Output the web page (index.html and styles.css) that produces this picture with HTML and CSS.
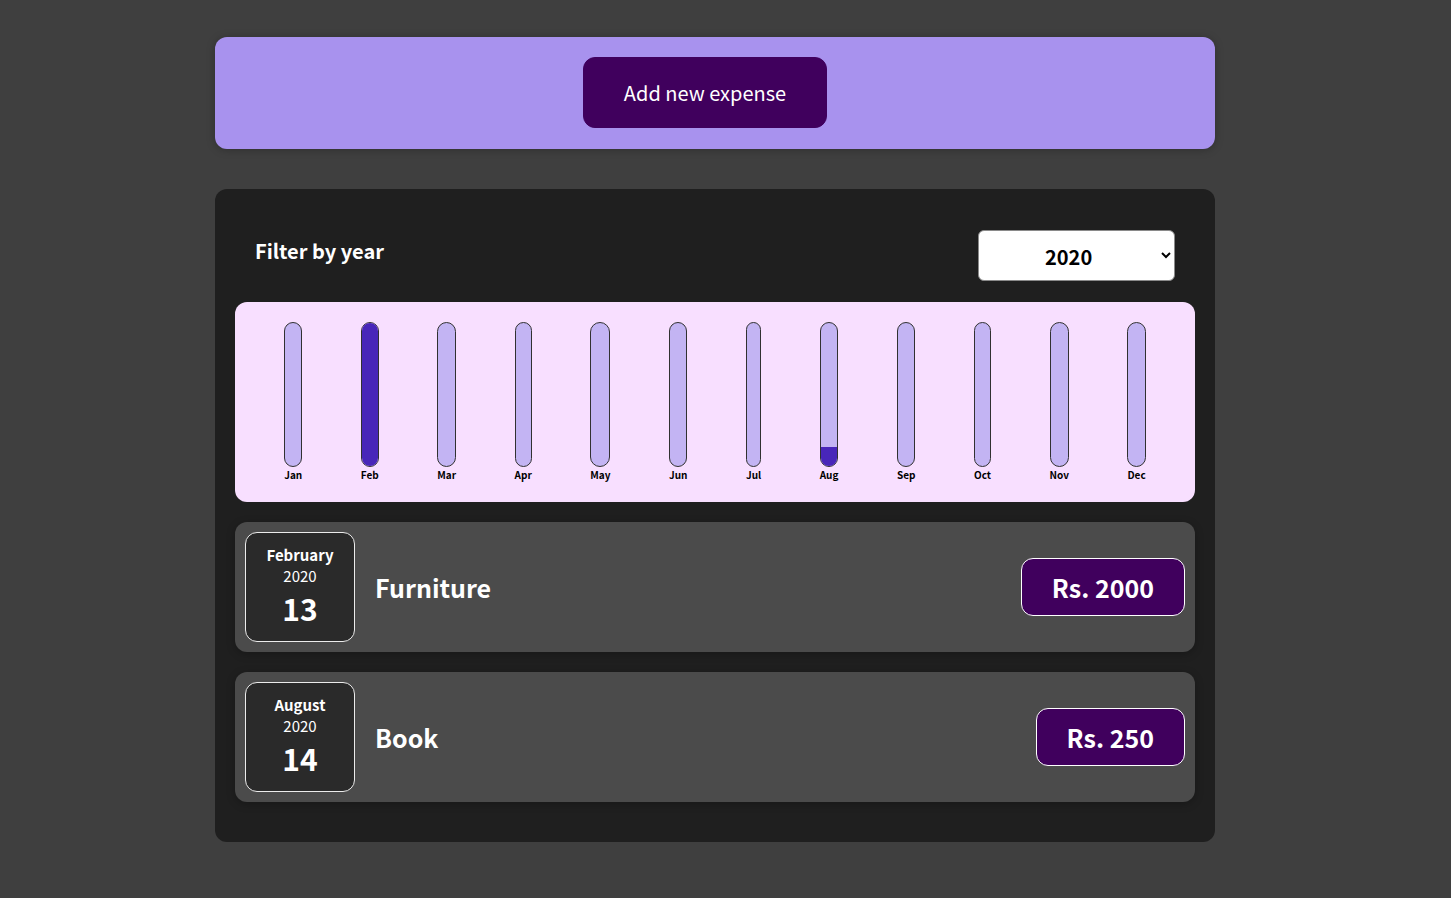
FILE: index.html
```html
<!DOCTYPE html>
<html lang="en">
<head>
<meta charset="utf-8">
<title>Expenses</title>
<link rel="stylesheet" href="styles.css">
</head>
<body>
<div class="app">
  <div class="new-expense">
    <button class="new-expense__button" type="button">Add new expense</button>
  </div>

  <div class="expenses">
    <div class="expenses-filter">
      <div class="expenses-filter__control">
        <label for="year">Filter by year</label>
        <select id="year">
          <option>2022</option>
          <option>2021</option>
          <option selected>2020</option>
          <option>2019</option>
        </select>
      </div>
    </div>

    <div class="chart">
      <div class="chart-bar"><div class="chart-bar__inner"><div class="chart-bar__fill" style="height:0%"></div></div><div class="chart-bar__label">Jan</div></div>
      <div class="chart-bar"><div class="chart-bar__inner"><div class="chart-bar__fill" style="height:100%"></div></div><div class="chart-bar__label">Feb</div></div>
      <div class="chart-bar"><div class="chart-bar__inner"><div class="chart-bar__fill" style="height:0%"></div></div><div class="chart-bar__label">Mar</div></div>
      <div class="chart-bar"><div class="chart-bar__inner"><div class="chart-bar__fill" style="height:0%"></div></div><div class="chart-bar__label">Apr</div></div>
      <div class="chart-bar"><div class="chart-bar__inner"><div class="chart-bar__fill" style="height:0%"></div></div><div class="chart-bar__label">May</div></div>
      <div class="chart-bar"><div class="chart-bar__inner"><div class="chart-bar__fill" style="height:0%"></div></div><div class="chart-bar__label">Jun</div></div>
      <div class="chart-bar"><div class="chart-bar__inner"><div class="chart-bar__fill" style="height:0%"></div></div><div class="chart-bar__label">Jul</div></div>
      <div class="chart-bar"><div class="chart-bar__inner"><div class="chart-bar__fill" style="height:13%"></div></div><div class="chart-bar__label">Aug</div></div>
      <div class="chart-bar"><div class="chart-bar__inner"><div class="chart-bar__fill" style="height:0%"></div></div><div class="chart-bar__label">Sep</div></div>
      <div class="chart-bar"><div class="chart-bar__inner"><div class="chart-bar__fill" style="height:0%"></div></div><div class="chart-bar__label">Oct</div></div>
      <div class="chart-bar"><div class="chart-bar__inner"><div class="chart-bar__fill" style="height:0%"></div></div><div class="chart-bar__label">Nov</div></div>
      <div class="chart-bar"><div class="chart-bar__inner"><div class="chart-bar__fill" style="height:0%"></div></div><div class="chart-bar__label">Dec</div></div>
    </div>

    <ul class="expenses-list">
      <li class="expense-item">
        <div class="expense-date">
          <div class="expense-date__month">February</div>
          <div class="expense-date__year">2020</div>
          <div class="expense-date__day">13</div>
        </div>
        <div class="expense-item__description">
          <h2>Furniture</h2>
          <div class="expense-item__price">Rs. 2000</div>
        </div>
      </li>
      <li class="expense-item">
        <div class="expense-date">
          <div class="expense-date__month">August</div>
          <div class="expense-date__year">2020</div>
          <div class="expense-date__day">14</div>
        </div>
        <div class="expense-item__description">
          <h2>Book</h2>
          <div class="expense-item__price">Rs. 250</div>
        </div>
      </li>
    </ul>
  </div>
</div>
</body>
</html>
```

FILE: styles.css
```css
* {
  box-sizing: border-box;
}

html {
  font-size: 20px;
  font-family: "Noto Sans CJK JP", "Noto Sans", sans-serif;
}

body {
  margin: 0;
  background-color: #3f3f3f;
}

.app {
  width: 1000px;
  margin-left: 215px;
  padding-top: 37px;
}

.new-expense {
  background-color: #a892ee;
  padding: 1rem 1rem 21px;
  margin: 0 0 2rem;
  border-radius: 12px;
  text-align: center;
  box-shadow: 0 1px 8px rgba(0, 0, 0, 0.25);
  line-height: 0;
}

.new-expense__button {
  font: inherit;
  font-size: 1rem;
  line-height: 29px;
  cursor: pointer;
  padding: 1rem 2rem;
  border: 1px solid #40005d;
  background-color: #40005d;
  color: white;
  border-radius: 12px;
  margin-right: 1rem;
}

.expenses {
  padding: 1rem;
  background-color: #1f1f1f;
  border-radius: 12px;
}

.expenses-filter {
  color: white;
  padding: 0 1rem;
}

.expenses-filter__control {
  display: flex;
  width: 100%;
  align-items: center;
  justify-content: space-between;
  margin: 1rem 0;
}

.expenses-filter label {
  font-weight: bold;
  margin-bottom: 0.5rem;
}

.expenses-filter select {
  font: inherit;
  padding: 0.5rem 65px 0.5rem 62px;
  height: 51px;
  margin: 1px 0;
  font-weight: bold;
  border-radius: 6px;
  background-color: #fff;
  color: #000;
  border: 1px solid #8a8a8a;
}

.chart {
  padding: 1rem;
  border-radius: 12px;
  background-color: #f8dfff;
  text-align: center;
  display: flex;
  justify-content: space-around;
  height: 10rem;
}

.chart-bar {
  height: 100%;
  display: flex;
  flex-direction: column;
  align-items: center;
}

.chart-bar__inner {
  height: 100%;
  width: 100%;
  border: 1px solid #313131;
  border-radius: 12px;
  background-color: #c3b4f3;
  overflow: hidden;
  display: flex;
  flex-direction: column;
  justify-content: flex-end;
}

.chart-bar__fill {
  background-color: #4826b9;
  width: 100%;
}

.chart-bar__label {
  font-weight: bold;
  font-size: 0.5rem;
  text-align: center;
  color: #000;
}

.expenses-list {
  list-style: none;
  padding: 0;
  margin: 0;
}

.expense-item {
  display: flex;
  justify-content: space-between;
  align-items: center;
  box-shadow: 0 2px 8px rgba(0, 0, 0, 0.25);
  padding: 0.5rem;
  margin: 1rem 0;
  border-radius: 12px;
  background-color: #4b4b4b;
}

.expense-date {
  display: flex;
  flex-direction: column;
  width: 5.5rem;
  height: 5.5rem;
  border: 1px solid #ececec;
  background-color: #2a2a2a;
  color: white;
  border-radius: 12px;
  align-items: center;
  justify-content: center;
}

.expense-date__month {
  font-size: 0.75rem;
  font-weight: bold;
}

.expense-date__year {
  font-size: 0.75rem;
}

.expense-date__day {
  font-size: 1.5rem;
  font-weight: bold;
}

.expense-item__description {
  display: flex;
  flex-direction: row;
  align-items: center;
  justify-content: flex-start;
  gap: 1rem;
  flex: 1;
}

.expense-item h2 {
  font-size: 1.25rem;
  flex: 1;
  margin: 0 1rem;
  color: white;
}

.expense-item__price {
  font-size: 1.25rem;
  font-weight: bold;
  color: white;
  background-color: #40005d;
  border: 1px solid white;
  padding: 0.5rem 1.5rem;
  border-radius: 12px;
}
```
